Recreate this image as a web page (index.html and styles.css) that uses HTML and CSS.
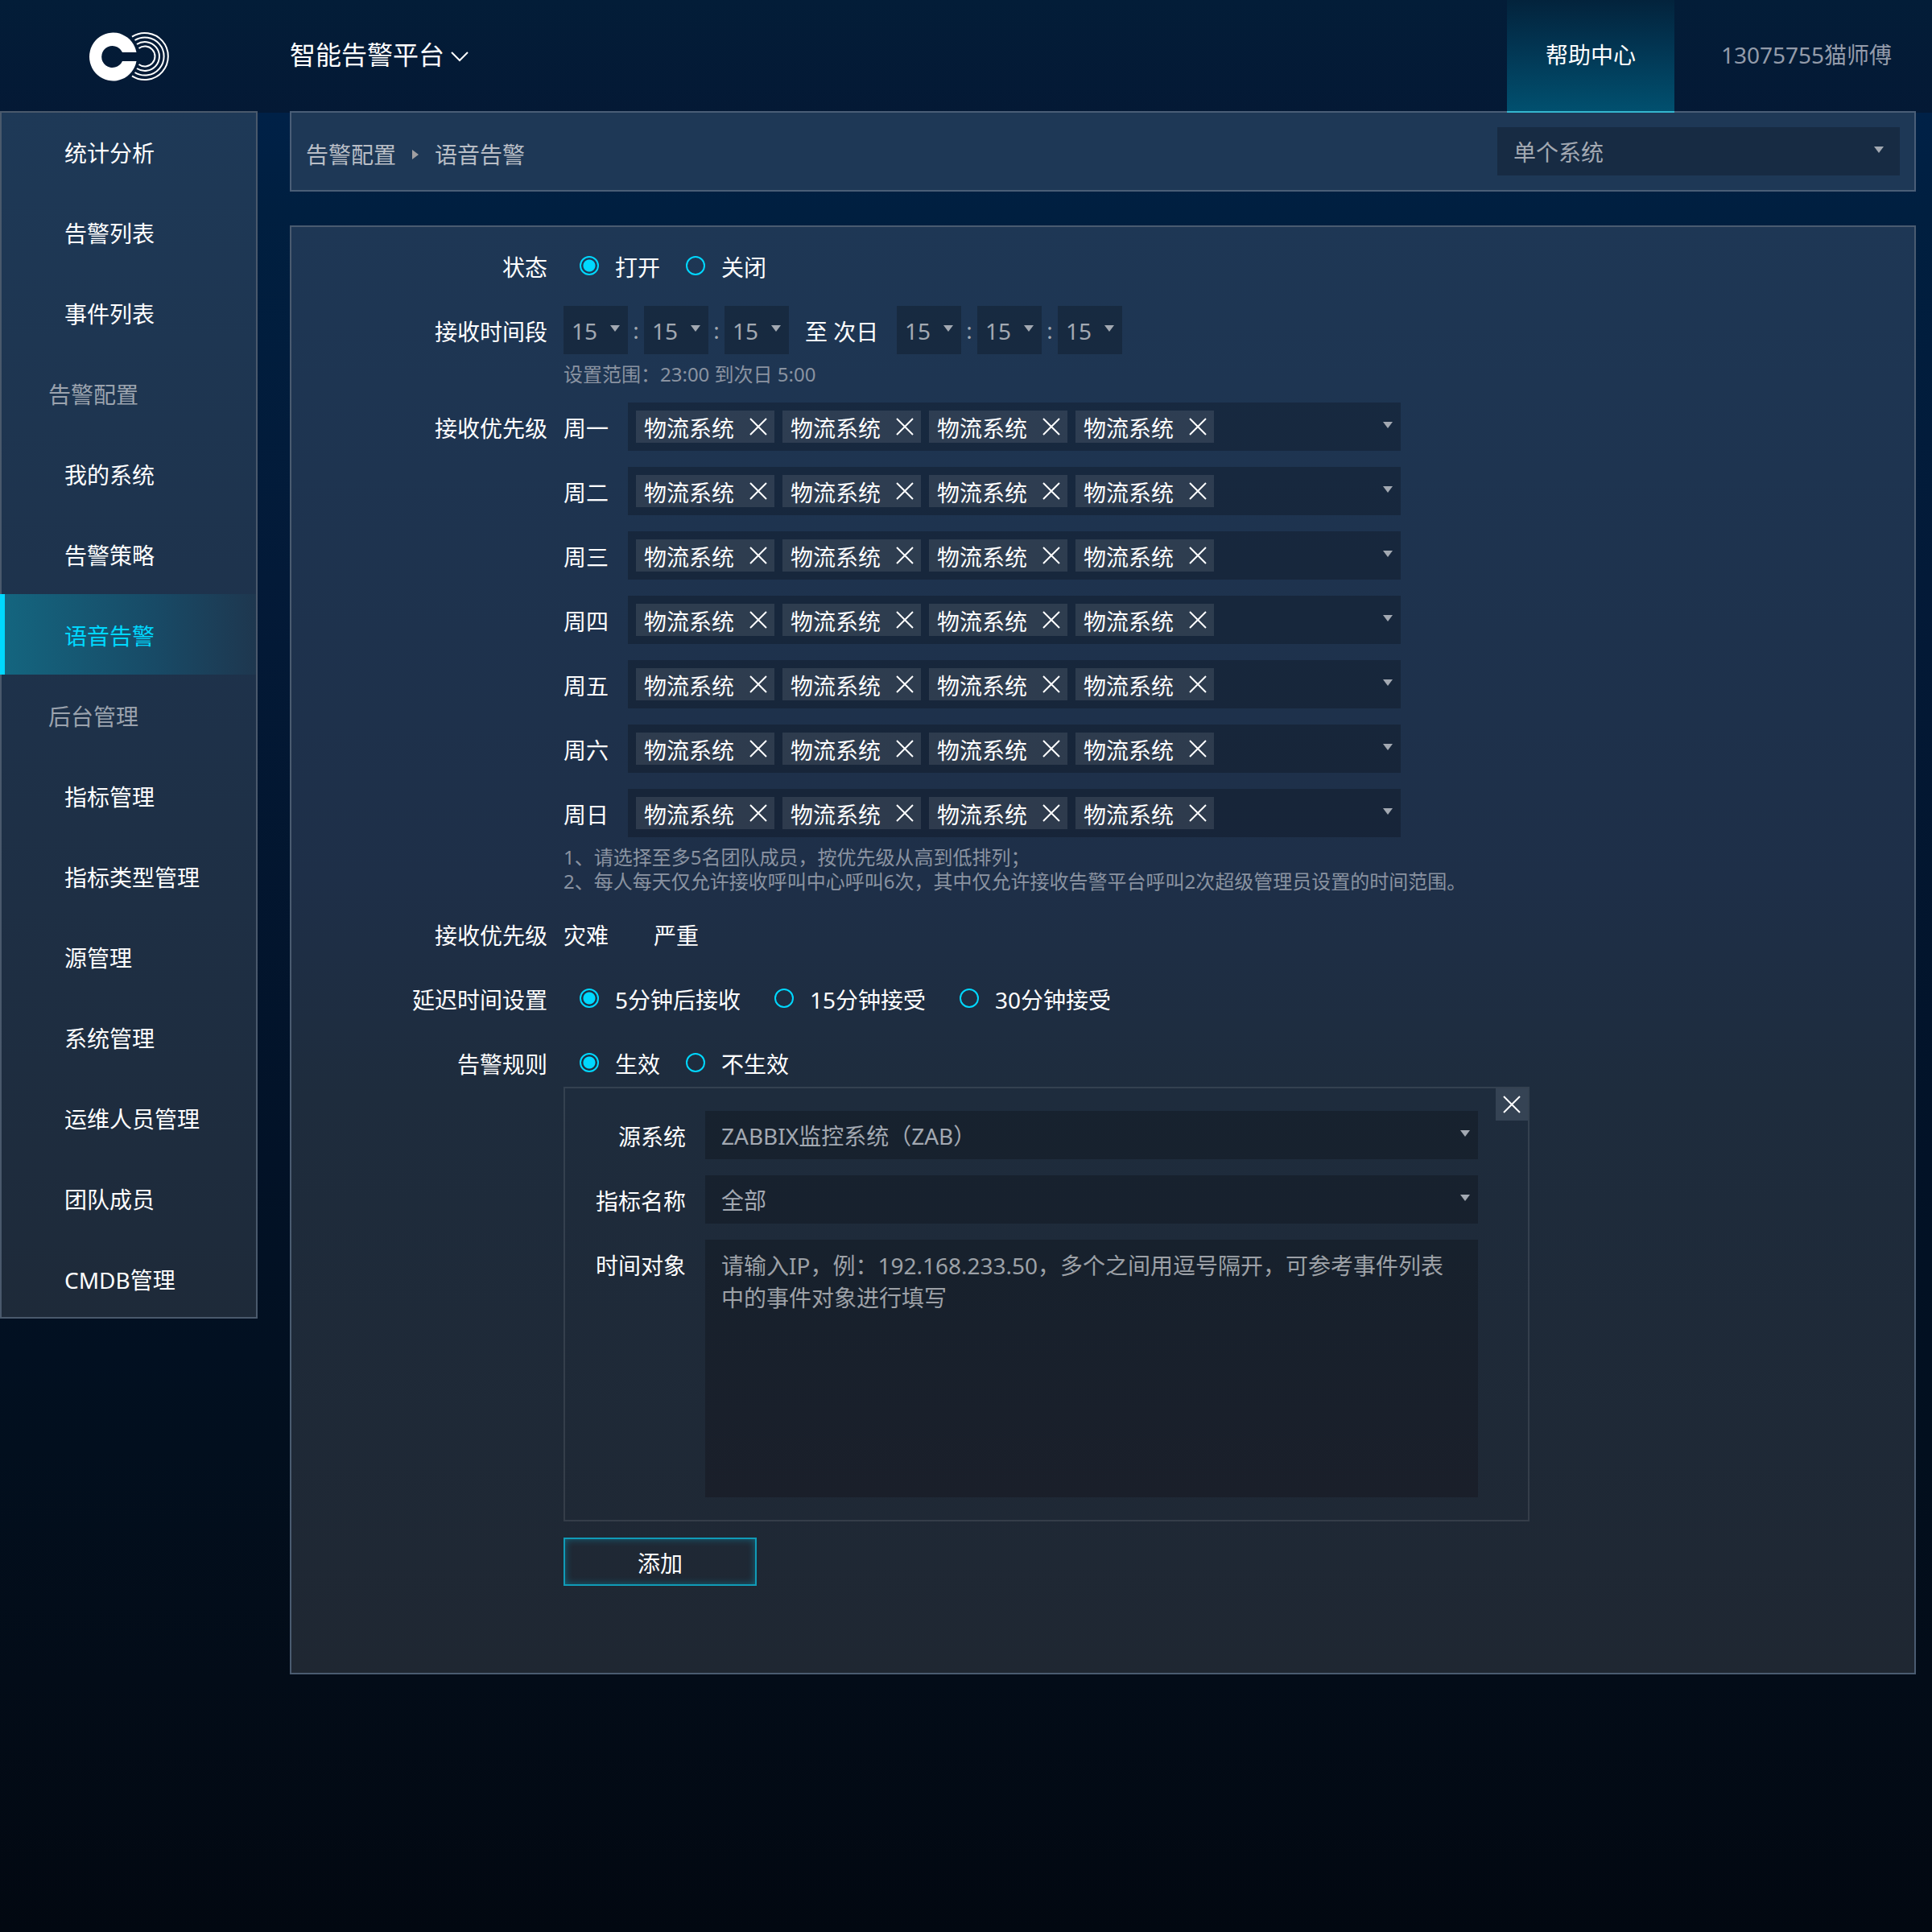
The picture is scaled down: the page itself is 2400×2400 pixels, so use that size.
FILE: index.html
```html
<!DOCTYPE html>
<html lang="zh-CN">
<head>
<meta charset="utf-8">
<title>语音告警</title>
<link rel="stylesheet" href="styles.css">
</head>
<body>
<svg class="defs" aria-hidden="true">
  <symbol id="cross" viewBox="0 0 22 22"><path d="M1 1L21 21M21 1L1 21" fill="none" stroke="#fff" stroke-width="2"/></symbol>
  <symbol id="caret" viewBox="0 0 12 8"><path d="M0 0H12L6 8Z" fill="#a3a9b2"/></symbol>
</svg>
<header class="topbar">
  <a class="logo" href="#" aria-label="首页">
    <svg width="102" height="64" viewBox="0 0 102 64">
      <path d="M60.500 27A29.500 30 0 1 0 60.500 38H43A13.500 13.500 0 1 1 43 27Z" fill="#fff"/>
      <g fill="none" stroke="#fff" stroke-width="2">
        <path d="M55 7.700A29 29 0 1 1 55 56.300"/>
        <path d="M58.500 12A23.600 23.600 0 1 1 58.500 52"/>
        <path d="M61 17A18 18 0 1 1 61 47"/>
        <path d="M63.500 22A12.500 12.500 0 1 1 63.500 42"/>
      </g>
    </svg>
  </a>
  <button class="platform" type="button"><span>智能告警平台</span>
    <svg width="22" height="14" viewBox="0 0 22 14"><path d="M1 2L11 12L21 2" fill="none" stroke="#fff" stroke-width="2"/></svg>
  </button>
  <a class="help" href="#">帮助中心</a>
  <a class="user" href="#">13075755猫师傅</a>
</header>
<div class="layout">
  <nav class="sidebar">
    <a class="item" href="#">统计分析</a>
    <a class="item" href="#">告警列表</a>
    <a class="item" href="#">事件列表</a>
    <h2 class="group">告警配置</h2>
    <a class="item" href="#">我的系统</a>
    <a class="item" href="#">告警策略</a>
    <a class="item active" href="#">语音告警</a>
    <h2 class="group">后台管理</h2>
    <a class="item" href="#">指标管理</a>
    <a class="item" href="#">指标类型管理</a>
    <a class="item" href="#">源管理</a>
    <a class="item" href="#">系统管理</a>
    <a class="item" href="#">运维人员管理</a>
    <a class="item" href="#">团队成员</a>
    <a class="item" href="#">CMDB管理</a>
  </nav>
  <main class="main">
    <div class="crumbs">
      <div class="trail">
        <a href="#">告警配置</a>
        <svg width="8" height="12" viewBox="0 0 8 12"><path d="M0 0L8 6L0 12Z" fill="#a09fa2"/></svg>
        <span>语音告警</span>
      </div>
      <div class="select system"><select aria-label="系统"><option>单个系统</option></select><svg class="caret"><use href="#caret"/></svg></div>
    </div>
    <form class="panel">
      <div class="row" role="radiogroup" aria-labelledby="l-state">
        <span class="label" id="l-state">状态</span>
        <div class="radios">
          <label><input type="radio" name="state" checked>打开</label>
          <label><input type="radio" name="state">关闭</label>
        </div>
      </div>
      <div class="row">
        <span class="label">接收时间段</span>
        <div class="times">
          <div class="select time"><select aria-label="开始时"><option>15</option></select><svg class="caret"><use href="#caret"/></svg></div><span class="colon">:</span>
          <div class="select time"><select aria-label="开始分"><option>15</option></select><svg class="caret"><use href="#caret"/></svg></div><span class="colon">:</span>
          <div class="select time"><select aria-label="开始秒"><option>15</option></select><svg class="caret"><use href="#caret"/></svg></div>
          <span class="to">至 次日</span>
          <div class="select time"><select aria-label="结束时"><option>15</option></select><svg class="caret"><use href="#caret"/></svg></div><span class="colon">:</span>
          <div class="select time"><select aria-label="结束分"><option>15</option></select><svg class="caret"><use href="#caret"/></svg></div><span class="colon">:</span>
          <div class="select time"><select aria-label="结束秒"><option>15</option></select><svg class="caret"><use href="#caret"/></svg></div>
        </div>
        <p class="hint">设置范围：23:00 到次日 5:00</p>
      </div>
      <div class="row">
        <span class="label">接收优先级</span>
        <div class="days" id="days"></div>
        <p class="hint">1、请选择至多5名团队成员，按优先级从高到低排列；<br>2、每人每天仅允许接收呼叫中心呼叫6次，其中仅允许接收告警平台呼叫2次超级管理员设置的时间范围。</p>
      </div>
      <div class="row">
        <span class="label">接收优先级</span>
        <div class="levels"><span>灾难</span><span>严重</span></div>
      </div>
      <div class="row" role="radiogroup" aria-labelledby="l-delay">
        <span class="label" id="l-delay">延迟时间设置</span>
        <div class="radios wide">
          <label><input type="radio" name="delay" checked>5分钟后接收</label>
          <label><input type="radio" name="delay">15分钟接受</label>
          <label><input type="radio" name="delay">30分钟接受</label>
        </div>
      </div>
      <div class="row rules" role="radiogroup" aria-labelledby="l-rule">
        <span class="label" id="l-rule">告警规则</span>
        <div class="radios">
          <label><input type="radio" name="rule" checked>生效</label>
          <label><input type="radio" name="rule">不生效</label>
        </div>
        <div class="rule">
          <button class="close" type="button" aria-label="关闭"><svg class="cross"><use href="#cross"/></svg></button>
          <label for="source">源系统</label>
          <div class="select"><select id="source"><option>ZABBIX监控系统（ZAB）</option></select><svg class="caret"><use href="#caret"/></svg></div>
          <label for="metric">指标名称</label>
          <div class="select"><select id="metric"><option>全部</option></select><svg class="caret"><use href="#caret"/></svg></div>
          <label for="target">时间对象</label>
          <textarea id="target" placeholder="请输入IP，例：192.168.233.50，多个之间用逗号隔开，可参考事件列表中的事件对象进行填写"></textarea>
        </div>
        <button class="add" type="button">添加</button>
      </div>
    </form>
  </main>
</div>
<script src="app.js"></script>
</body>
</html>
```
FILE: styles.css
```css
* { box-sizing: border-box; }

html {
  min-height: 100%;
  background: linear-gradient(#002249 0%, #002147 6%, #001f40 11%, #031a38 30%, #021227 60%, #020f1e 75%, #030c18 87%, #020811 100%);
}

body {
  margin: 0;
  color: #fff;
  font: 28px/40px "Noto Sans", "Noto Sans CJK SC", sans-serif;
}

a { color: inherit; text-decoration: none; }

button, select, textarea {
  margin: 0;
  padding: 0;
  border: 0;
  border-radius: 0;
  background: none;
  color: inherit;
  font: inherit;
}

.defs { position: absolute; width: 0; height: 0; }
.caret { width: 12px; height: 8px; }
.cross { display: block; width: 22px; height: 22px; }

/* Top bar */
.topbar {
  display: flex;
  align-items: stretch;
  height: 140px;
  margin-bottom: -2px;
  background: linear-gradient(#031d38, #041935);
}

.logo {
  display: flex;
  align-items: center;
  width: 360px;
  padding-left: 109px;
}

.platform {
  display: flex;
  align-items: center;
  gap: 8px;
  margin-right: auto;
  font-size: 32px;
}

.platform span { padding-bottom: 4px; }

.help {
  position: relative;
  z-index: 1;
  width: 208px;
  padding-top: 48px;
  border-bottom: 2px solid #35b6cf;
  background: linear-gradient(#03233c, #023451 40%, #01506f);
  text-align: center;
}

.user {
  width: 320px;
  padding: 48px 48px 0 56px;
  color: #939baa;
  text-align: center;
}

/* Page frame */
.layout { display: flex; align-items: flex-start; gap: 40px; }

.sidebar {
  flex: none;
  width: 320px;
  background: linear-gradient(#1e3957, #1e324b 45%, #1e2a39);
  box-shadow: inset 0 0 0 2px #4a596c;
}

.item, .group {
  display: block;
  height: 100px;
  margin: 0 2px 0 0;
  padding: 32px 0 0 80px;
  font-size: 28px;
  font-weight: 400;
}

.group { padding-left: 60px; color: #9ba3ae; }

.active {
  padding-left: 74px;
  border-left: 6px solid #00d8ff;
  background: linear-gradient(90deg, #14657f, #184a66 60%, #1e374f);
  color: #00d8ff;
}

.main { flex: 1; padding-right: 20px; }

.crumbs {
  display: flex;
  align-items: center;
  justify-content: space-between;
  height: 100px;
  margin-bottom: 42px;
  padding: 0 18px;
  border: 2px solid #4a5e77;
  background: #1e3856;
}

.trail {
  display: flex;
  align-items: center;
  gap: 20px;
  padding-top: 8px;
  color: #b9bec6;
}

.system { width: 500px; }

.panel {
  padding: 18px 18px 108px 98px;
  border: 2px solid #4a5b70;
  background: linear-gradient(#1e3755, #1e2f48 45%, #1e2c3d 60%, #1f2732);
}

/* Form rows: label column, then the controls */
.row {
  display: grid;
  grid-template-columns: 220px minmax(0, 1200px);
  column-gap: 20px;
  margin-bottom: 20px;
}

.row > :nth-child(n + 3) { grid-column: 2; }

.label { padding: 12px 0 8px; text-align: right; }

.radios { display: flex; gap: 32px; padding: 4px 0 0 20px; }
.wide { gap: 42px; }
.radios label { display: flex; align-items: center; gap: 20px; }

input[type="radio"] {
  appearance: none;
  width: 24px;
  height: 24px;
  margin: 0 0 4px;
  border: 2px solid #00d8ff;
  border-radius: 50%;
}

input[type="radio"]:checked { background: radial-gradient(circle, #00d8ff 7px, transparent 8px); }

.select {
  display: flex;
  align-items: center;
  height: 60px;
  padding-right: 20px;
  background: rgba(0, 0, 0, .22);
  color: #a3a9b2;
}

.select select {
  flex: 1;
  appearance: none;
  min-width: 0;
  height: 60px;
  margin-right: -12px;
  padding: 2px 0 0 20px;
}

.select .caret, .picker > .caret { margin-bottom: 4px; }

.times { display: flex; }
.time { width: 80px; padding-right: 10px; }
.time select { padding-left: 10px; }
.colon { width: 20px; padding: 10px 0; color: #a3a9b2; text-align: center; }
.to { width: 134px; padding: 12px 20px 8px; white-space: nowrap; }

.hint {
  margin: 10px 0 0;
  color: #8a93a1;
  font-size: 24px;
  line-height: 30px;
}

.days { display: grid; gap: 20px; }
.day { display: flex; }
.day-name { width: 80px; padding: 12px 0 8px; }

.picker {
  display: flex;
  align-items: center;
  gap: 10px;
  width: 960px;
  height: 60px;
  padding: 0 10px;
  background: rgba(0, 0, 0, .22);
}

.picker > .caret { margin-left: auto; }

.tag {
  display: flex;
  align-items: center;
  justify-content: space-between;
  width: 172px;
  height: 40px;
  padding: 0 9px 0 10px;
  background: rgba(255, 255, 255, .1);
}

.tag-name { padding-top: 4px; }

.levels { display: flex; gap: 56px; padding: 12px 0 8px; }

/* Rule editor */
.rules { margin-bottom: 0; }

.rule {
  position: relative;
  display: grid;
  grid-template-columns: 130px minmax(0, 960px);
  gap: 20px 24px;
  width: 100%;
  padding: 28px 20px;
  border: 2px solid rgba(255, 255, 255, .1);
}

.rule label { padding: 12px 0 8px; text-align: right; }
.rule .select { padding-right: 10px; }

.rule textarea {
  height: 320px;
  padding: 12px 20px;
  background: linear-gradient(#17212d, #1a1f2a);
  resize: none;
}

.rule textarea::placeholder { color: #9da1a7; opacity: 1; }

.close {
  position: absolute;
  top: 0;
  right: 0;
  display: grid;
  place-items: center;
  width: 40px;
  height: 40px;
  background: #354354;
}

.add {
  width: 240px;
  height: 60px;
  margin-top: 20px;
  padding-top: 4px;
  border: 2px solid #109bb7;
  box-shadow: inset 0 0 10px rgba(0, 216, 255, .35);
}
```
FILE: app.js
```js
const days = ["周一", "周二", "周三", "周四", "周五", "周六", "周日"];
const tag = '<span class="tag"><span class="tag-name">物流系统</span><button type="button" aria-label="移除"><svg class="cross"><use href="#cross"/></svg></button></span>';
document.getElementById("days").innerHTML = days
  .map((day) => `<div class="day"><span class="day-name">${day}</span><div class="picker">${tag.repeat(4)}<svg class="caret"><use href="#caret"/></svg></div></div>`)
  .join("");
```
